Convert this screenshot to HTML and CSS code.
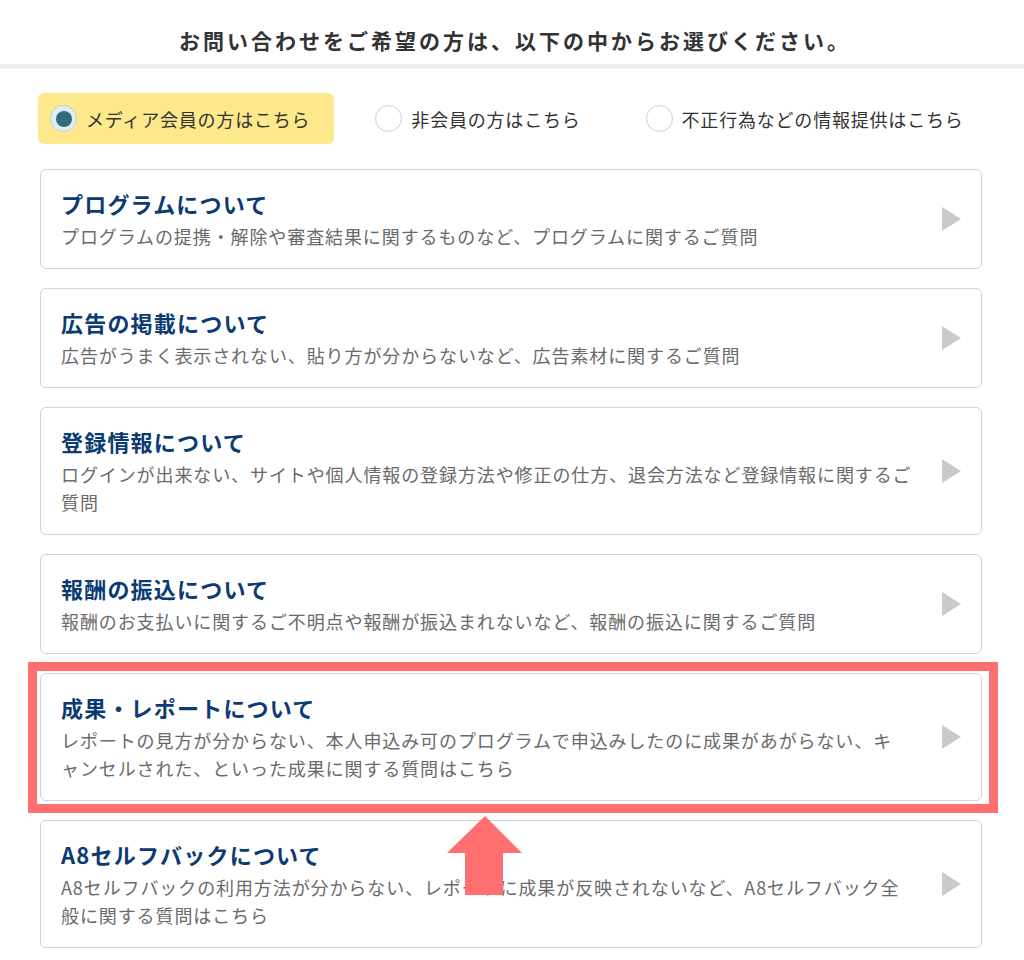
FILE: index.html
```html
<!DOCTYPE html>
<html lang="ja">
<head>
    <meta charset="UTF-8">
    <meta name="viewport" content="width=device-width, initial-scale=1.0">
    <title>お問い合わせ</title>
    <link rel="stylesheet" href="styles.css">
</head>
<body>
    <header class="page-head">
        <h1>お問い合わせをご希望の方は、以下の中からお選びください。</h1>
    </header>

    <main class="container">
        <div class="member-select">
            <label class="member-option checked">
                <span class="radio"></span>
                <span>メディア会員の方はこちら</span>
            </label>
            <label class="member-option">
                <span class="radio"></span>
                <span>非会員の方はこちら</span>
            </label>
            <label class="member-option">
                <span class="radio"></span>
                <span>不正行為などの情報提供はこちら</span>
            </label>
        </div>

        <ul class="topic-list">
            <li class="topic">
                <div class="topic-body">
                    <h2>プログラムについて</h2>
                    <p>プログラムの提携・解除や審査結果に関するものなど、プログラムに関するご質問</p>
                </div>
                <span class="topic-arrow"></span>
            </li>
            <li class="topic">
                <div class="topic-body">
                    <h2>広告の掲載について</h2>
                    <p>広告がうまく表示されない、貼り方が分からないなど、広告素材に関するご質問</p>
                </div>
                <span class="topic-arrow"></span>
            </li>
            <li class="topic">
                <div class="topic-body">
                    <h2>登録情報について</h2>
                    <p>ログインが出来ない、サイトや個人情報の登録方法や修正の仕方、退会方法など登録情報に関するご<br>質問</p>
                </div>
                <span class="topic-arrow"></span>
            </li>
            <li class="topic">
                <div class="topic-body">
                    <h2>報酬の振込について</h2>
                    <p>報酬のお支払いに関するご不明点や報酬が振込まれないなど、報酬の振込に関するご質問</p>
                </div>
                <span class="topic-arrow"></span>
            </li>
            <li class="topic highlighted">
                <div class="topic-body">
                    <h2>成果・レポートについて</h2>
                    <p>レポートの見方が分からない、本人申込み可のプログラムで申込みしたのに成果があがらない、キ<br>ャンセルされた、といった成果に関する質問はこちら</p>
                </div>
                <span class="topic-arrow"></span>
                <span class="highlight-frame"></span>
                <svg class="highlight-arrow" width="75" height="79" viewBox="0 0 75 79">
                    <polygon points="38,0 75,37 56,37 56,79 18,79 18,37 0,37" fill="#ff6f6f"/>
                </svg>
            </li>
            <li class="topic">
                <div class="topic-body">
                    <h2>A8セルフバックについて</h2>
                    <p>A8セルフバックの利用方法が分からない、レポートに成果が反映されないなど、A8セルフバック全<br>般に関する質問はこちら</p>
                </div>
                <span class="topic-arrow"></span>
            </li>
        </ul>
    </main>
</body>
</html>
```

FILE: styles.css
```css
body {
    margin: 0;
    font-family: "Noto Sans CJK JP", "Noto Sans", sans-serif;
    background: #fff;
    color: #333;
}

.page-head {
    height: 64px;
    display: flex;
    align-items: center;
    justify-content: center;
    border-bottom: 5px solid #eeeeee;
}

.page-head h1 {
    margin: 0;
    font-size: 21px;
    font-weight: bold;
    letter-spacing: 3px;
    color: #333;
    padding: 16px 0 0 6px;
}

.container {
    width: 942px;
    margin: 0 0 0 40px;
}

/* member type radios */
.member-select {
    display: flex;
    gap: 29px;
    margin: 24px 0 25px -2px;
}

.member-option {
    display: flex;
    align-items: center;
    flex-shrink: 0;
    height: 51px;
    padding: 0 24px 0 12px;
    border-radius: 6px;
    font-size: 18px;
    letter-spacing: 0.8px;
    white-space: nowrap;
    color: #333;
}

.member-option.checked {
    background: #fde98b;
}

.radio {
    width: 25px;
    height: 25px;
    border-radius: 50%;
    border: 1px solid #cfcfcf;
    background: #fff;
    margin-right: 9px;
    display: flex;
    align-items: center;
    justify-content: center;
    flex-shrink: 0;
}

.checked .radio {
    background: #e3ecf0;
    border-color: #c3d0d7;
}

.checked .radio::after {
    content: '';
    width: 16px;
    height: 16px;
    border-radius: 50%;
    background: #2f6c80;
}

/* topic cards */
.topic-list {
    list-style: none;
    margin: 0;
    padding: 0;
    display: flex;
    flex-direction: column;
    gap: 19px;
}

.topic {
    position: relative;
    display: flex;
    align-items: center;
    border: 1px solid #d2d2d2;
    border-radius: 6px;
    padding: 18px 20px 18px 20px;
}

.topic-body {
    flex: 1;
}

.topic h2 {
    margin: 0;
    font-size: 22px;
    line-height: 30px;
    font-weight: bold;
    letter-spacing: 1.2px;
    color: #0b3b72;
}

.topic p {
    margin: 4px 0 0;
    font-size: 18px;
    line-height: 28px;
    letter-spacing: 0.9px;
    color: #6a6a6a;
    white-space: nowrap;
}

.topic-arrow {
    width: 0;
    height: 0;
    border-top: 12px solid transparent;
    border-bottom: 12px solid transparent;
    border-left: 19px solid #cacaca;
    flex-shrink: 0;
}

.highlight-frame {
    position: absolute;
    left: -13px;
    top: -12px;
    right: -17px;
    bottom: -13px;
    border: 9px solid #ff6f6f;
    z-index: 2;
    pointer-events: none;
}

.highlight-arrow {
    position: absolute;
    left: 406px;
    top: 142px;
    z-index: 2;
}
```
